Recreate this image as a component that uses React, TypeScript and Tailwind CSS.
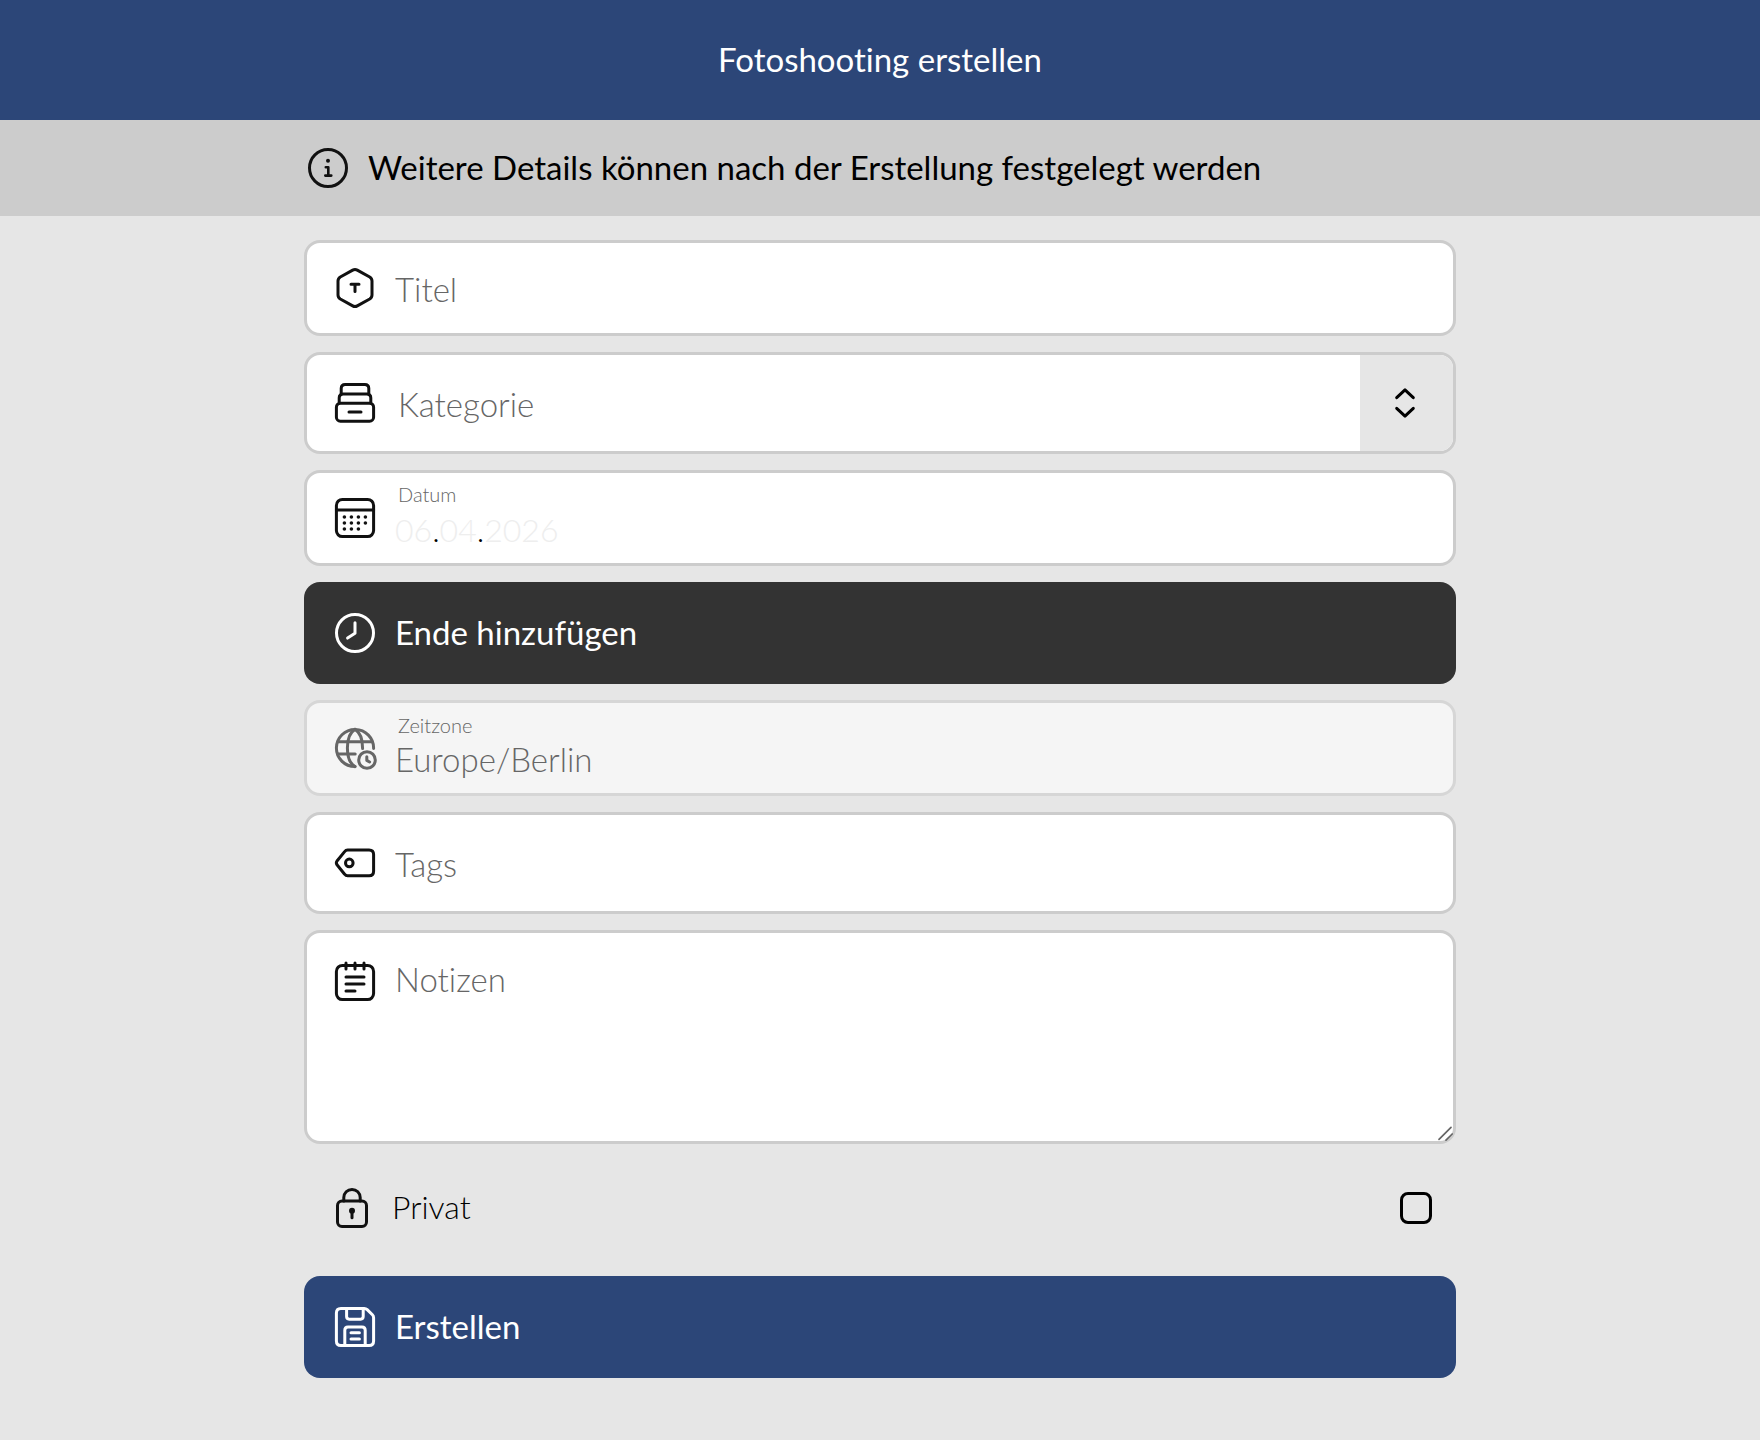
import type { ReactNode } from "react";

function Icon({ children, width = 40 }: { children: ReactNode; width?: number }) {
  return (
    <svg
      aria-hidden="true"
      width={width}
      height="40"
      viewBox={`0 0 ${width} 40`}
      className="shrink-0 overflow-visible text-[#111] in-[button]:text-inherit in-[.disabled]:text-inherit"
      fill="none"
      stroke="currentColor"
      strokeWidth="3"
      strokeLinecap="round"
      strokeLinejoin="round"
    >
      {children}
    </svg>
  );
}

const InfoIcon = () => (
  <Icon>
    <circle cx="20" cy="20" r="18.5" />
    <circle cx="20" cy="12.8" r="2" fill="currentColor" stroke="none" />
    <path d="M17.8 19.3h2.5v8.2M17.3 27.6h6" strokeWidth="2.6" />
  </Icon>
);

const TitleIcon = () => (
  <Icon>
    <path d="M17.7 2.1Q20 .8 22.3 2.1L34.7 9Q37 10.4 37 13V27Q37 29.6 34.7 31L22.3 37.9Q20 39.2 17.7 37.9L5.3 31Q3 29.6 3 27V13Q3 10.4 5.3 9Z" />
    <path d="M16 16.2h8M20 16.2v7.4" />
  </Icon>
);

const CategoryIcon = () => (
  <Icon>
    <rect x="1.4" y="20.2" width="37.2" height="18" rx="4" />
    <path d="M4.2 20V15Q4.2 11 8.2 11H31.8Q35.8 11 35.8 15V20" />
    <path d="M6.2 11V5.4Q6.2 1.4 10.2 1.4H29.8Q33.8 1.4 33.8 5.4V11" />
    <path d="M14 29h12" />
  </Icon>
);

const CalendarIcon = () => (
  <Icon>
    <rect x="1.4" y="1.4" width="37.2" height="37.2" rx="6" />
    <path d="M1.4 12h37.2" />
    <g fill="currentColor" stroke="none">
      {[19, 25, 31].map((y) =>
        [9.4, 16.4, 23.4, 30.4]
          .filter((x) => !(y === 31 && x > 30))
          .map((x) => <circle key={`${x}-${y}`} cx={x} cy={y} r="1.8" />)
      )}
    </g>
  </Icon>
);

const ClockIcon = () => (
  <Icon>
    <circle cx="20" cy="20" r="18.5" />
    <path d="M20 9.7v10.6l-7.4 4.8" />
  </Icon>
);

const TimezoneIcon = () => (
  <Icon width={42}>
    <path d="M20 38.6A18.6 18.6 0 1 1 38.6 20.4" />
    <path d="M20 1.4C15.5 4 12.4 11 12.4 20S15.5 36 20 38.6M20 1.4C24.5 4 27.6 11 27.6 20.6" />
    <path d="M2.8 13.8h34.4M2.8 26h17.4" />
    <circle cx="32" cy="32" r="8.3" />
    <path d="M31.8 28.8v3.6l2.8 1.6" />
  </Icon>
);

const TagIcon = () => (
  <Icon>
    <path d="M12.6 7H34.1Q38.6 7 38.6 11.5V28.3Q38.6 32.8 34.1 32.8H12.6Q10.8 32.8 9.6 31.2L2 21.8Q.7 19.9 2 18L9.6 8.6Q10.8 7 12.6 7Z" />
    <circle cx="14.3" cy="19.9" r="3.8" />
  </Icon>
);

const NotesIcon = () => (
  <Icon>
    <rect x="1.4" y="4.4" width="37.2" height="34.2" rx="6" />
    <path d="M11 2v6M20 2v6M29 2v6M11 16h18M11 23h18M11 30h9" />
  </Icon>
);

const LockIcon = () => (
  <Icon width={32}>
    <rect x="1.5" y="13" width="29" height="25.6" rx="4.5" />
    <path d="M7.8 13V9.6a8.2 8.2 0 0 1 16.4 0V13" />
    <circle cx="16" cy="22.8" r="3" fill="currentColor" stroke="none" />
    <path d="M16 23.5v6.3" />
  </Icon>
);

const SaveIcon = () => (
  <Icon>
    <path d="M5.9 1.4H29.2Q31 1.4 32.2 2.6L37.4 7.8Q38.6 9 38.6 10.8V34.1Q38.6 38.6 34.1 38.6H5.9Q1.4 38.6 1.4 34.1V5.9Q1.4 1.4 5.9 1.4Z" />
    <path d="M11.6 1.4V9.6Q11.6 12.2 14.2 12.2H25.6Q28.2 12.2 28.2 9.6V1.4" />
    <path d="M9.8 38.6V23.2Q9.8 20 13 20H27Q30.2 20 30.2 23.2V38.6" />
    <path d="M16 25.8h8.4M16 32h8.4" />
  </Icon>
);

const ChevronsIcon = () => (
  <Icon>
    <path d="M11.7 14.6L20 6.8L28.3 14.6M11.7 25.4L20 33.2L28.3 25.4" />
  </Icon>
);

const FIELD = "flex items-center rounded-2xl border-3 border-[#ccc] bg-white pl-7";
const INPUT =
  "min-w-0 flex-1 self-stretch bg-transparent pl-5 font-light text-black outline-none placeholder:text-[#666]";
const BUTTON =
  "flex h-[102px] w-full items-center gap-5 rounded-2xl pl-[31px] text-left text-white";
const DATE_PART = "field-sizing-content bg-transparent text-[#eee] outline-none";

export default function App() {
  return (
    <div className="min-h-screen bg-[#e6e6e6] font-['Lato',sans-serif] text-[33px] leading-10 text-black [font-variant-ligatures:none]">
      <header className="flex h-30 items-center justify-center bg-[#2c4678] pb-0.5 text-white">
        <h1>Fotoshooting erstellen</h1>
      </header>

      <div className="bg-[#ccc]">
        <div className="mx-auto flex h-24 max-w-6xl items-center gap-5 px-1">
          <InfoIcon />
          <p className="pb-0.5">Weitere Details können nach der Erstellung festgelegt werden</p>
        </div>
      </div>

      <form
        className="mx-auto flex max-w-6xl flex-col gap-4 pt-6 pb-10"
        onSubmit={(e) => e.preventDefault()}
      >
        <div className={`${FIELD} h-24`}>
          <TitleIcon />
          <input type="text" aria-label="Titel" placeholder="Titel" className={`${INPUT} pt-0.5`} />
        </div>

        <div className={`${FIELD} h-[102px] overflow-hidden`}>
          <CategoryIcon />
          <select
            aria-label="Kategorie"
            className="min-w-0 flex-1 appearance-none self-stretch bg-transparent pt-0.5 pl-[23px] font-light text-[#666] outline-none"
          >
            <option>Kategorie</option>
          </select>
          <button
            type="button"
            aria-label="Kategorie wählen"
            className="flex w-[93px] items-center justify-center self-stretch bg-[#e6e6e6] pr-1"
          >
            <ChevronsIcon />
          </button>
        </div>

        <div className={`${FIELD} h-24`}>
          <CalendarIcon />
          <div className="flex flex-col pb-1 pl-5 font-light">
            <label htmlFor="day" className="pl-[3px] text-[20px] leading-6 text-[#666]">
              Datum
            </label>
            <div className="flex pt-1 text-[32px] leading-10">
              <input id="day" defaultValue="06" aria-label="Tag" className={DATE_PART} />
              <span>.</span>
              <input defaultValue="04" aria-label="Monat" className={DATE_PART} />
              <span>.</span>
              <input defaultValue="2026" aria-label="Jahr" className={DATE_PART} />
            </div>
          </div>
        </div>

        <button type="button" className={`${BUTTON} bg-[#333]`}>
          <ClockIcon />
          <span className="pb-0.5">Ende hinzufügen</span>
        </button>

        <div className="disabled flex h-24 items-center rounded-2xl border-3 border-[#d6d6d6] bg-[#f5f5f5] pl-7 text-[#666]">
          <TimezoneIcon />
          <div className="flex min-w-0 flex-1 flex-col gap-0.5 pb-1 pl-[18px] font-light">
            <label htmlFor="timezone" className="pl-[3px] text-[20px] leading-6">
              Zeitzone
            </label>
            <input
              id="timezone"
              disabled
              defaultValue="Europe/Berlin"
              className="bg-transparent outline-none"
            />
          </div>
        </div>

        <div className={`${FIELD} h-[102px]`}>
          <TagIcon />
          <input type="text" aria-label="Tags" placeholder="Tags" className={`${INPUT} pt-0.5`} />
        </div>

        <div className="relative flex h-[214px] rounded-2xl border-3 border-[#ccc] bg-white pt-7 pl-7">
          <NotesIcon />
          <textarea
            aria-label="Notizen"
            placeholder="Notizen"
            className={`${INPUT} resize-none leading-9`}
          />
          <svg
            aria-hidden="true"
            width="16"
            height="16"
            viewBox="0 0 16 16"
            className="absolute right-0 bottom-0"
            stroke="#666"
            strokeWidth="1.7"
            strokeLinecap="round"
          >
            <path d="M2 14.3L14 2.3M9 15.2L15.2 9" />
          </svg>
        </div>

        <label className="mb-1 flex h-24 items-center pr-6 pl-8 text-[32px] font-light">
          <LockIcon />
          <span className="flex-1 pb-0.5 pl-6">Privat</span>
          <input
            type="checkbox"
            className="size-8 appearance-none rounded-lg border-3 border-black checked:bg-black"
          />
        </label>

        <button type="submit" className={`${BUTTON} bg-[#2c4678]`}>
          <SaveIcon />
          <span className="pb-0.5">Erstellen</span>
        </button>
      </form>
    </div>
  );
}
